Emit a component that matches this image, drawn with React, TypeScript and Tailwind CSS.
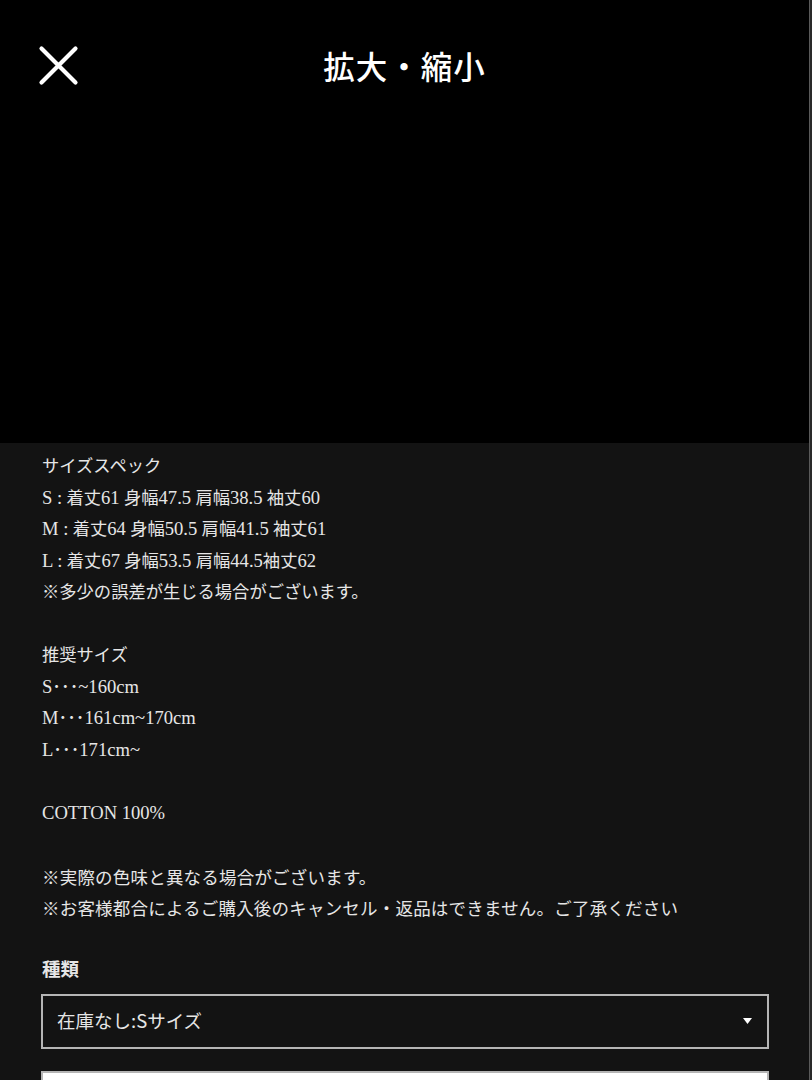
const specLines = [
  'サイズスペック',
  'S : 着丈61 身幅47.5 肩幅38.5 袖丈60',
  'M : 着丈64 身幅50.5 肩幅41.5 袖丈61',
  'L : 着丈67 身幅53.5 肩幅44.5袖丈62',
  '※多少の誤差が生じる場合がございます。',
  '',
  '推奨サイズ',
  'S･･･~160cm',
  'M･･･161cm~170cm',
  'L･･･171cm~',
  '',
  'COTTON 100%',
  '',
];

const notes = [
  '※実際の色味と異なる場合がございます。',
  '※お客様都合によるご購入後のキャンセル・返品はできません。ご了承ください',
];

// latin runs are set a touch larger than the japanese, like the original page
function SpecLine({ text }: { text: string }) {
  const parts = text ? text.split(/([A-Za-z0-9.%~:]+(?: [A-Za-z0-9.%~:]+)*)/) : [];
  return (
    <p className="h-[31.5px] whitespace-nowrap">
      {parts.map((part, i) =>
        i % 2 === 1 ? (
          <span key={i} className="text-[18.6px] leading-none">
            {part}
          </span>
        ) : (
          <span key={i}>{part}</span>
        ),
      )}
    </p>
  );
}

export default function App() {
  return (
    <div className="flex h-[1080px] w-[812px] overflow-hidden bg-[#131313] text-white">
      <div className="flex-1 overflow-hidden">
        {/* Zoom viewer header */}
        <div className="h-[443px] bg-black">
          <div className="relative flex h-[132px] items-center justify-center">
            <button className="absolute left-[38px] top-[45px] text-white">
              <svg width="41" height="41" viewBox="0 0 41 41" fill="none">
                <path
                  d="M3.5 3.5 L37.5 37.5 M37.5 3.5 L3.5 37.5"
                  stroke="currentColor"
                  strokeWidth="4.2"
                  strokeLinecap="round"
                />
              </svg>
            </button>
            <h1 className="font-['Noto_Sans_CJK_JP',sans-serif] text-[31.5px] font-medium tracking-[1px]">
              拡大・縮小
            </h1>
          </div>
        </div>

        {/* Description */}
        <div className="pl-[42px] pr-[40px] pt-[8px]">
          <div className="font-['Liberation_Serif','Noto_Sans_CJK_JP',serif] text-[17.3px] leading-[31.5px] text-[#e6e6e6]">
            {specLines.map((line, i) => (
              <SpecLine key={i} text={line} />
            ))}
          </div>
          <div className="font-['Noto_Sans_CJK_JP',sans-serif] text-[17.5px] leading-[31.5px] tracking-[0.2px] text-[#e6e6e6]">
            {notes.map((n) => (
              <p key={n}>{n}</p>
            ))}
          </div>

          <div className="-ml-px mt-[30px] font-['Noto_Sans_CJK_JP',sans-serif]">
            <p className="pl-px text-[18.5px] font-bold leading-[28px] text-[#e6e6e6]">種類</p>
            <div className="mt-[12px] flex h-[55px] items-center justify-between border-2 border-[#b5b5b5] pl-[14px] pr-[15px]">
              <span className="text-[18.5px] text-[#e6e6e6]">在庫なし:Sサイズ</span>
              <svg width="9" height="6" viewBox="0 0 9 6" className="text-white">
                <path d="M0 0 L9 0 L4.5 6 Z" fill="currentColor" />
              </svg>
            </div>
            <div className="mt-[22px] h-[60px] border-2 border-[#b5b5b5] bg-white" />
          </div>
        </div>
      </div>
      <div className="w-[3px] shrink-0 border-l border-[#5a5a5a] bg-[#2a2a2a]" />
    </div>
  );
}
